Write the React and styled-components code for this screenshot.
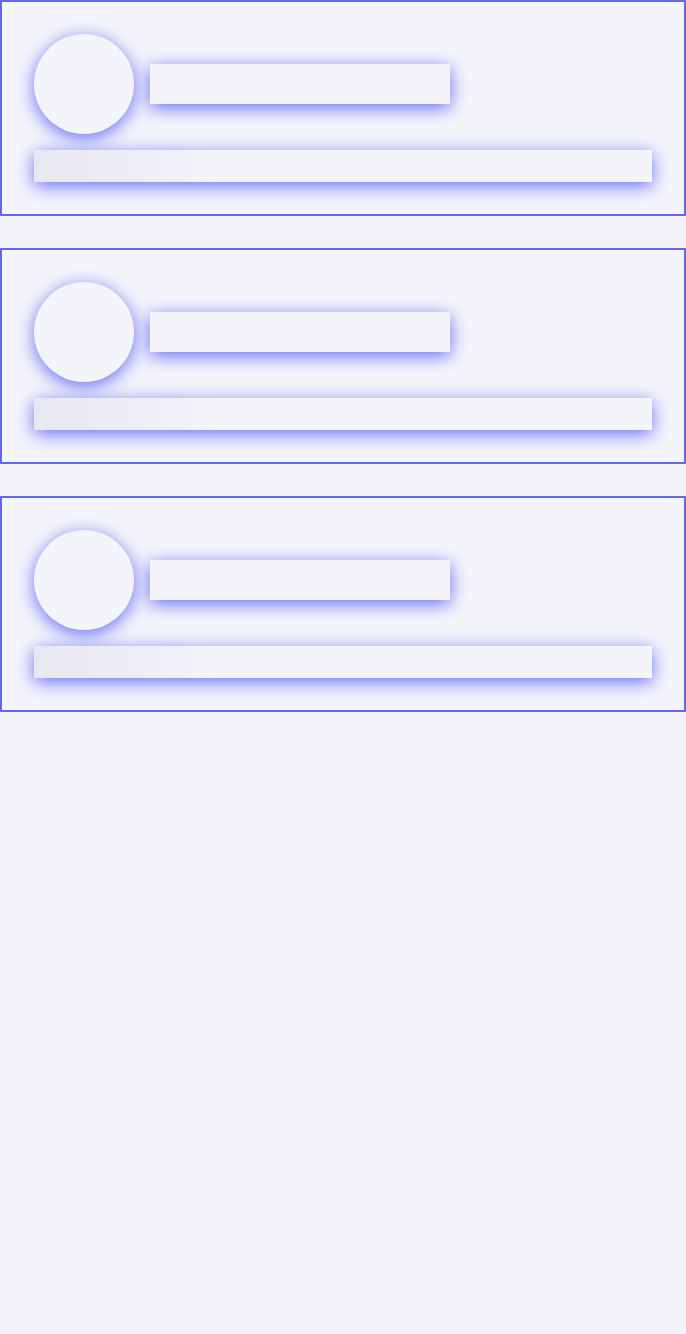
import React from 'react';
import styled, { createGlobalStyle } from 'styled-components';

const GlobalStyle = createGlobalStyle`
  * { box-sizing: border-box; }
  body {
    margin: 0;
    background: #f4f5fb;
    font-family: "Open Sans", sans-serif;
  }
`;

const List = styled.div`
  display: flex;
  flex-direction: column;
  gap: 32px;
`;

const Card = styled.div`
  border: 2px solid #6366f1;
  background: #f4f5fb;
  padding: 32px;
  display: flex;
  flex-direction: column;
  gap: 16px;
`;

const Row = styled.div`
  display: flex;
  align-items: center;
  gap: 16px;
`;

const glow = '0 4px 18px rgba(80, 84, 245, 0.85)';

const Avatar = styled.div`
  width: 100px;
  height: 100px;
  border-radius: 50%;
  background: #f4f5fb;
  box-shadow: ${glow};
  flex-shrink: 0;
`;

const Bar = styled.div`
  width: ${p => p.width || '100%'};
  height: ${p => p.height}px;
  background: ${p => p.shimmer
    ? 'linear-gradient(90deg, #e8e8f2 0%, #ecedf6 15%, #f4f5fb 30%, #f4f5fb 100%)'
    : '#f4f5fb'};
  box-shadow: ${glow};
`;

function SkeletonCard() {
  return (
    <Card>
      <Row>
        <Avatar />
        <Bar width="300px" height={40} />
      </Row>
      <Bar height={32} shimmer />
    </Card>
  );
}

export default function App() {
  return (
    <>
      <GlobalStyle />
      <List>
        {[0, 1, 2].map(i => <SkeletonCard key={i} />)}
      </List>
    </>
  );
}
